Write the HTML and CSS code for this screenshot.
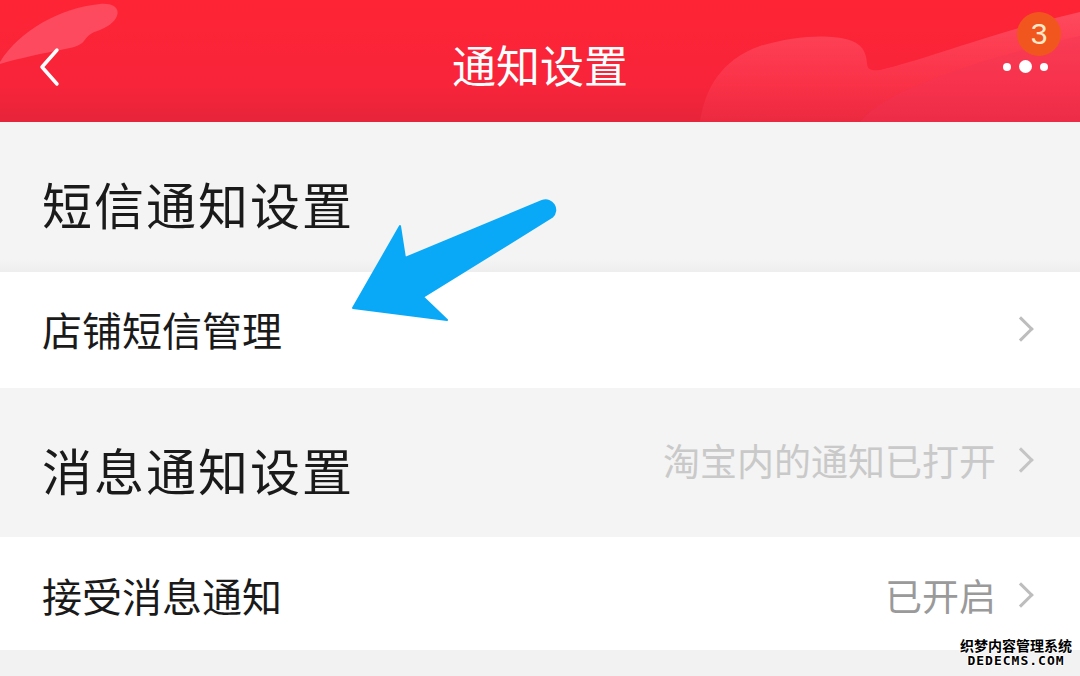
FILE: index.html
```html
<!DOCTYPE html>
<html lang="zh-CN">
<head>
    <meta charset="UTF-8">
    <meta name="viewport" content="width=device-width, initial-scale=1.0">
    <title>通知设置</title>
    <link rel="stylesheet" href="styles.css">
</head>
<body>
    <div class="page">
        <header class="topbar">
            <svg class="topbar-bg" width="1080" height="122" viewBox="0 0 1080 122">
                <defs>
                    <linearGradient id="hill" x1="0" y1="0" x2="0" y2="1">
                        <stop offset="0" stop-color="#ff6a80" stop-opacity="0.55"/>
                        <stop offset="1" stop-color="#ff4860" stop-opacity="0.15"/>
                    </linearGradient>
                </defs>
                <path d="M0 62 C20 30 60 8 100 4 C125 2 122 22 100 30 C80 36 90 44 70 48 C40 54 20 58 0 64 Z" fill="#ff6f86" opacity="0.5"/>
                <path d="M700 122 C705 90 720 60 760 46 C800 34 850 32 862 48 C872 62 860 72 880 70 C930 58 1000 30 1080 12 L1080 122 Z" fill="url(#hill)"/>
                <path d="M860 122 C880 96 950 66 1080 36 L1080 122 Z" fill="#f03355" opacity="0.35"/>
            </svg>
            <a class="back" href="#">
                <svg width="30" height="44" viewBox="0 0 30 44">
                    <path d="M21 5 L6 22 L21 39" fill="none" stroke="#fff" stroke-width="3.5" stroke-linecap="round" stroke-linejoin="round"/>
                </svg>
            </a>
            <h1 class="title">通知设置</h1>
            <div class="more">
                <span class="dot"></span>
                <span class="dot big"></span>
                <span class="dot"></span>
                <span class="badge">3</span>
            </div>
        </header>

        <div class="group-title group-sms">
            <span>短信通知设置</span>
        </div>
        <div class="row row-shop">
            <span class="label">店铺短信管理</span>
            <span class="chev"></span>
        </div>

        <div class="group-title group-msg">
            <span>消息通知设置</span>
            <span class="side raised">淘宝内的通知已打开<span class="chev"></span></span>
        </div>
        <div class="row row-accept">
            <span class="label">接受消息通知</span>
            <span class="side dark">已开启<span class="chev"></span></span>
        </div>
        <div class="footer-gap"></div>

        <svg class="arrow" width="1080" height="676" viewBox="0 0 1080 676">
            <path d="M353 308 L400 226 L405 258 L542 201 C552 197 560 210 552 217 L423 297 L447 320 Z" fill="#0aa9f7" stroke="#0aa9f7" stroke-width="2" stroke-linejoin="round"/>
        </svg>

        <div class="watermark">
            <div>织梦内容管理系统</div>
            <div class="wm-en">DEDECMS.COM</div>
        </div>
    </div>
</body>
</html>
```

FILE: styles.css
```css
* {
    box-sizing: border-box;
}
body {
    margin: 0;
    font-family: "Noto Sans CJK SC", "Noto Sans", sans-serif;
    background: #f4f4f4;
    color: #1a1a1a;
}
.page {
    position: relative;
    width: 1080px;
    height: 676px;
    overflow: hidden;
    display: flex;
    flex-direction: column;
}
.topbar {
    position: relative;
    height: 122px;
    display: flex;
    align-items: center;
    justify-content: center;
    background: linear-gradient(to bottom, #fe2435, #f8243a 70%, #e6243a);
    flex-shrink: 0;
}
.topbar-bg {
    position: absolute;
    left: 0;
    top: 0;
}
.back {
    position: absolute;
    left: 36px;
    top: 45px;
    display: flex;
}
.title {
    position: relative;
    margin: 0;
    font-size: 44px;
    font-weight: 400;
    color: #fff;
    line-height: 1;
    margin-top: 6px;
}
.more {
    position: absolute;
    right: 32px;
    top: 60px;
    display: flex;
    align-items: center;
    gap: 8px;
}
.dot {
    width: 8px;
    height: 8px;
    border-radius: 50%;
    background: #fff;
}
.dot.big {
    width: 13px;
    height: 13px;
}
.badge {
    position: absolute;
    left: 14px;
    top: -48px;
    width: 44px;
    height: 44px;
    border-radius: 50%;
    background: #f1561f;
    color: #ffe9c8;
    font-family: "Liberation Sans", sans-serif;
    font-size: 30px;
    line-height: 44px;
    text-align: center;
}
.group-title {
    display: flex;
    align-items: center;
    justify-content: space-between;
    padding: 0 50px 0 42px;
    font-size: 50px;
    letter-spacing: 2px;
    color: #1a1a1a;
}
.group-sms {
    height: 150px;
    padding-top: 12px;
    background: linear-gradient(to bottom, #f4f4f4 92%, #eeeeee);
}
.group-msg {
    height: 149px;
    padding-top: 12px;
}
.row {
    display: flex;
    align-items: center;
    justify-content: space-between;
    padding: 0 50px 0 42px;
    background: #fff;
    font-size: 40px;
    color: #1a1a1a;
}
.row-shop {
    height: 116px;
    padding-bottom: 2px;
}
.row-accept {
    height: 113px;
    padding-top: 2px;
}
.footer-gap {
    flex: 1;
    background: #f2f2f2;
}
.side {
    display: flex;
    align-items: center;
    font-size: 37px;
    letter-spacing: 0;
    color: #c9c9c9;
}
.side.raised {
    margin-top: -18px;
}
.side.dark {
    color: #9a9a9a;
}
.chev {
    display: inline-block;
    width: 18px;
    height: 18px;
    border-top: 3px solid #bdbdbd;
    border-right: 3px solid #bdbdbd;
    transform: rotate(45deg);
    margin-left: 16px;
}
.group-msg .chev {
    border-color: #c4c4c4;
}
.arrow {
    position: absolute;
    left: 0;
    top: 0;
    pointer-events: none;
}
.watermark {
    position: absolute;
    right: 8px;
    bottom: 8px;
    font-size: 14px;
    line-height: 15px;
    font-weight: 700;
    color: #000;
    text-shadow: 1px 0 #fff, -1px 0 #fff, 0 1px #fff, 0 -1px #fff;
    text-align: center;
}
.wm-en {
    font-family: "DejaVu Sans Mono", monospace;
    font-size: 13px;
    letter-spacing: 1px;
}
```
